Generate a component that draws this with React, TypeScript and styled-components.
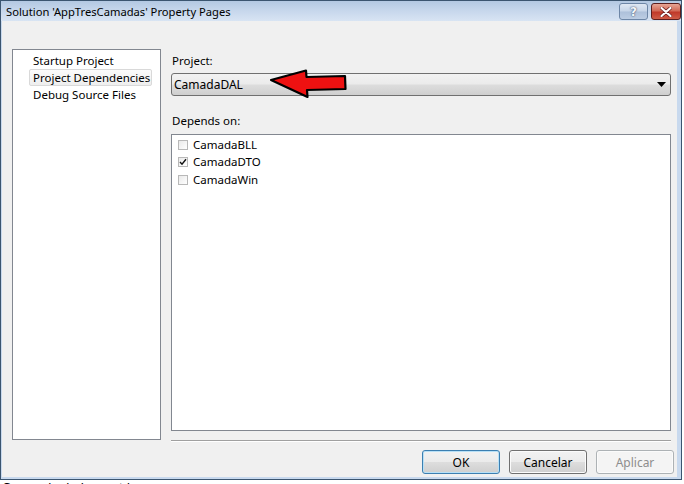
import styled, { createGlobalStyle } from "styled-components";

const GlobalStyle = createGlobalStyle`
  html, body {
    margin: 0;
    padding: 0;
    background: #ffffff;
    overflow: hidden;
  }
  body {
    font-family: "Noto Sans", "Open Sans", sans-serif;
    font-size: 11.5px;
    color: #000;
  }
`;

const pages = ["Startup Project", "Project Dependencies", "Debug Source Files"];
const deps = [
  { name: "CamadaBLL", checked: false },
  { name: "CamadaDTO", checked: true },
  { name: "CamadaWin", checked: false },
];

export default function App() {
  return (
    <>
      <GlobalStyle />
      <Window>
        <TitleBar>
          <Title>Solution 'AppTresCamadas' Property Pages</Title>
          <CaptionButtons>
            <HelpButton>?</HelpButton>
            <CloseButton>
              <svg width="12" height="10" viewBox="0 0 12 10">
                <path
                  d="M1.5 1 L10.5 9 M10.5 1 L1.5 9"
                  stroke="#6b1f1f"
                  strokeWidth="3.6"
                  strokeLinecap="round"
                />
                <path
                  d="M1.5 1 L10.5 9 M10.5 1 L1.5 9"
                  stroke="#ffffff"
                  strokeWidth="2.2"
                  strokeLinecap="round"
                />
              </svg>
            </CloseButton>
          </CaptionButtons>
        </TitleBar>
        <Client>
          <Main>
            <PageList>
              {pages.map((p) => (
                <PageItem key={p} $selected={p === "Project Dependencies"}>
                  {p}
                </PageItem>
              ))}
            </PageList>
            <RightColumn>
              <FieldLabel>Project:</FieldLabel>
              <Combo>
                <span>CamadaDAL</span>
                <svg width="9" height="5" viewBox="0 0 9 5">
                  <path d="M0 0 H9 L4.5 5 Z" fill="#000" />
                </svg>
                <Arrow width="80" height="32" viewBox="0 0 80 32">
                  <path
                    d="M2 11 L37 1.5 L37.5 8 L76 7 L76.5 20 L38 21 L38.5 28 Z"
                    fill="#ee1111"
                    stroke="#000"
                    strokeWidth="2.2"
                    strokeLinejoin="round"
                  />
                </Arrow>
              </Combo>
              <FieldLabel $gap={17}>Depends on:</FieldLabel>
              <DepList>
                {deps.map((d) => (
                  <DepRow key={d.name}>
                    <CheckBox>
                      {d.checked && (
                        <svg width="8" height="8" viewBox="0 0 8 8">
                          <path
                            d="M1 4 L3 6.2 L7 1.2"
                            stroke="#111"
                            strokeWidth="1.4"
                            fill="none"
                          />
                        </svg>
                      )}
                    </CheckBox>
                    {d.name}
                  </DepRow>
                ))}
              </DepList>
              <Separator />
            </RightColumn>
          </Main>
          <Footer>
            <DialogButton $variant="default">OK</DialogButton>
            <DialogButton>Cancelar</DialogButton>
            <DialogButton $variant="disabled">Aplicar</DialogButton>
          </Footer>
        </Client>
      </Window>
      <BelowText>Comando dado no string</BelowText>
    </>
  );
}

const Window = styled.div`
  width: 682px;
  box-sizing: border-box;
  border: 1px solid #3b5570;
  background: #c8d9ee;
  padding: 0 4px 2px 1px;
  display: flex;
  flex-direction: column;
`;

const TitleBar = styled.div`
  height: 20px;
  display: flex;
  align-items: flex-start;
  margin: 0 -4px 0 -1px;
  background: linear-gradient(to bottom, #b3c8e2 0%, #c7d7ec 50%, #d8e4f3 100%);
`;

const Title = styled.div`
  padding: 3px 0 0 5px;
  font-size: 11.2px;
  line-height: 16px;
  color: #000;
`;

const CaptionButtons = styled.div`
  margin-left: auto;
  margin-top: 2px;
  display: flex;
  gap: 3px;
`;

const HelpButton = styled.div`
  width: 29px;
  height: 17px;
  box-sizing: border-box;
  border: 1px solid #6d86a6;
  border-radius: 3px;
  background: linear-gradient(to bottom, #dfe8f3 0%, #c6d5e8 48%, #adc0da 52%, #bccde3 100%);
  display: flex;
  align-items: center;
  justify-content: center;
  font-family: "DejaVu Sans", sans-serif;
  font-weight: bold;
  font-size: 12px;
  color: #f4f6f9;
  text-shadow: 0 0 2px #44597a, 0 0 1px #44597a;
`;

const CloseButton = styled.div`
  width: 30px;
  height: 17px;
  box-sizing: border-box;
  border: 1px solid #5b1e1e;
  border-radius: 3px;
  background: linear-gradient(to bottom, #e7a595 0%, #d26a57 45%, #c0392a 55%, #cf5c47 100%);
  display: flex;
  align-items: center;
  justify-content: center;
`;

const Client = styled.div`
  height: 456px;
  background: #f0f0f0;
  display: flex;
  flex-direction: column;
`;

const Main = styled.div`
  display: flex;
  padding: 28px 0 0 10px;
  gap: 10px;
`;

const PageList = styled.div`
  width: 149px;
  height: 391px;
  box-sizing: border-box;
  border: 1px solid #828790;
  background: #fff;
  padding: 2px 0 0 16px;
`;

const PageItem = styled.div<{ $selected?: boolean }>`
  width: 123px;
  height: 17px;
  box-sizing: border-box;
  line-height: 15px;
  padding-left: 3px;
  white-space: nowrap;
  border: 1px solid ${(p) => (p.$selected ? "#d9d9d9" : "transparent")};
  border-radius: 2px;
  background: ${(p) =>
    p.$selected ? "linear-gradient(to bottom, #fbfbfb, #eeeeee)" : "transparent"};
`;

const RightColumn = styled.div`
  width: 500px;
  display: flex;
  flex-direction: column;
`;

const FieldLabel = styled.div<{ $gap?: number }>`
  margin-top: ${(p) => p.$gap ?? 4}px;
  height: 16px;
  line-height: 16px;
  padding-left: 1px;
`;

const Combo = styled.div`
  position: relative;
  margin-top: 4px;
  height: 23px;
  box-sizing: border-box;
  border: 1px solid #707070;
  border-radius: 3px;
  background: linear-gradient(to bottom, #f2f2f2 0%, #ebebeb 48%, #dddddd 52%, #cfcfcf 100%);
  display: flex;
  align-items: center;
  justify-content: space-between;
  padding: 0 4px 0 2px;
  font-size: 12px;
`;

const Arrow = styled.svg`
  position: absolute;
  left: 97px;
  top: -5px;
`;

const DepList = styled.div`
  margin-top: 5px;
  height: 297px;
  box-sizing: border-box;
  border: 1px solid #828790;
  background: #fff;
  padding: 1px 0 0 6px;
`;

const DepRow = styled.div`
  height: 17.5px;
  display: flex;
  align-items: center;
  gap: 5px;
  line-height: 16px;
`;

const CheckBox = styled.div`
  width: 10px;
  height: 10px;
  box-sizing: border-box;
  border: 1px solid #b8b8b8;
  background: linear-gradient(to bottom right, #e9e9e9, #ffffff);
  display: flex;
  align-items: center;
  justify-content: center;
`;

const Separator = styled.div`
  margin-top: 9px;
  height: 1px;
  background: #a0a0a0;
  border-bottom: 1px solid #ffffff;
`;

const Footer = styled.div`
  display: flex;
  justify-content: flex-end;
  gap: 9px;
  margin-top: 8px;
  padding-right: 3px;
`;

const DialogButton = styled.div<{ $variant?: "default" | "disabled" }>`
  width: 78px;
  height: 24px;
  box-sizing: border-box;
  border-radius: 3px;
  display: flex;
  align-items: center;
  justify-content: center;
  font-size: 12px;
  border: 1px solid
    ${(p) =>
      p.$variant === "default" ? "#3c7fb1" : p.$variant === "disabled" ? "#adb2b5" : "#707070"};
  box-shadow: ${(p) =>
    p.$variant === "default" ? "inset 0 0 0 1px #b8e0f6" : "inset 0 0 0 1px #fbfbfb"};
  color: ${(p) => (p.$variant === "disabled" ? "#8d8d8d" : "#000")};
  background: ${(p) =>
    p.$variant === "disabled"
      ? "#f4f4f4"
      : "linear-gradient(to bottom, #f2f2f2 0%, #ebebeb 48%, #dddddd 52%, #cfcfcf 100%)"};
`;

const BelowText = styled.div`
  margin: 1px 0 0 2px;
  font-family: "Liberation Sans", sans-serif;
  font-size: 13px;
  line-height: 14px;
  color: #000;
`;
